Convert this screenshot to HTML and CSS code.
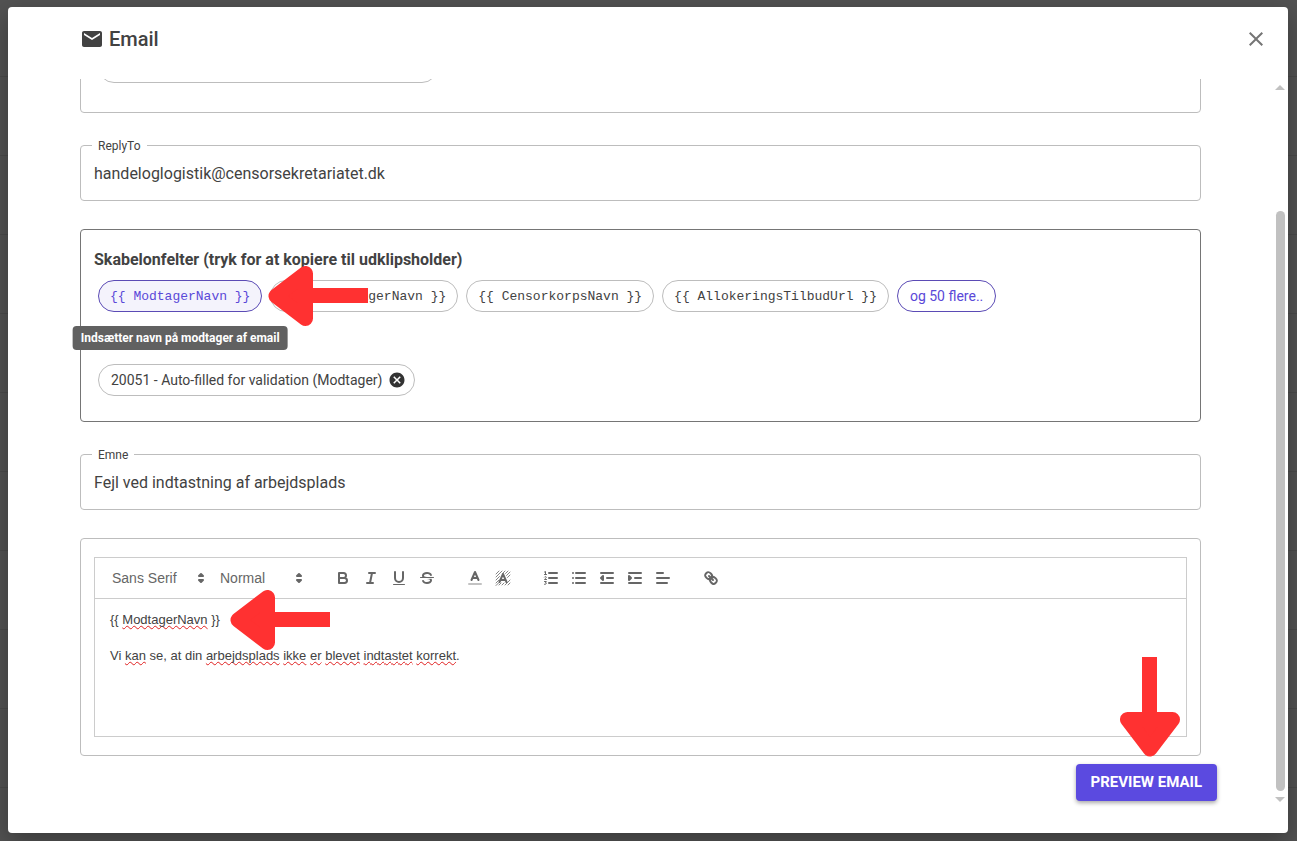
FILE: index.html
```html
<!DOCTYPE html>
<html lang="da">
<head>
  <meta charset="UTF-8">
  <meta name="viewport" content="width=device-width, initial-scale=1.0">
  <title>Email</title>
  <link rel="stylesheet" href="styles.css">
</head>
<body>
  <div class="dialog" role="dialog" aria-labelledby="dialog-title">
    <header class="dialog-header">
      <svg class="icon" viewBox="0 0 24 24"><path d="M20 4H4c-1.100 0-1.990.9-1.990 2L2 18c0 1.100.9 2 2 2h16c1.100 0 2-.9 2-2V6c0-1.100-.9-2-2-2zm0 4l-8 5-8-5V6l8 5 8-5v2z"/></svg>
      <h1 id="dialog-title">Email</h1>
      <button class="close" type="button" aria-label="Luk">
        <svg class="icon" viewBox="0 0 24 24"><path d="M19 6.410L17.590 5 12 10.590 6.410 5 5 6.410 10.590 12 5 17.590 6.410 19 12 13.410 17.590 19 19 17.590 13.410 12z"/></svg>
      </button>
    </header>

    <div class="dialog-body">
      <form class="content">
        <div class="box recipients">
          <div class="chip chip-empty"></div>
        </div>

        <div class="field">
          <label for="reply-to">ReplyTo</label>
          <input id="reply-to" type="text" value="handeloglogistik@censorsekretariatet.dk">
        </div>

        <div class="box templates">
          <h2>Skabelonfelter (tryk for at kopiere til udklipsholder)</h2>
          <div class="chips">
            <div class="chip-wrap">
              <button class="chip code active" type="button">{{ ModtagerNavn }}</button>
              <div class="tooltip" role="tooltip">Indsætter navn på modtager af email</div>
              <svg class="arrow arrow-chip" viewBox="0 0 100 60"><path class="head" d="M8 30L37.500 7.500V52.500Z"/><path d="M40 22h60v15H40z"/></svg>
            </div>
            <button class="chip code" type="button">{{ MedModtagerNavn }}</button>
            <button class="chip code" type="button">{{ CensorkorpsNavn }}</button>
            <button class="chip code" type="button">{{ AllokeringsTilbudUrl }}</button>
            <button class="chip more" type="button">og 50 flere..</button>
          </div>
          <div class="chips selected">
            <div class="chip">
              20051 - Auto-filled for validation (Modtager)
              <button class="remove" type="button" aria-label="Fjern">
                <svg viewBox="0 0 24 24"><path d="M12 2C6.470 2 2 6.470 2 12s4.470 10 10 10 10-4.470 10-10S17.530 2 12 2zm5 13.590L15.590 17 12 13.410 8.410 17 7 15.590 10.590 12 7 8.410 8.410 7 12 10.590 15.590 7 17 8.410 13.410 12 17 15.590z"/></svg>
              </button>
            </div>
          </div>
        </div>

        <div class="field">
          <label for="subject">Emne</label>
          <input id="subject" type="text" value="Fejl ved indtastning af arbejdsplads">
        </div>

        <div class="box editor-box">
          <div class="toolbar">
            <div class="group">
              <div class="picker font">
                <select aria-label="Skrifttype"><option>Sans Serif</option></select>
                <svg viewBox="0 0 18 18"><path class="solid" d="M7 11L9 13L11 11ZM7 7L9 5L11 7Z"/></svg>
              </div>
              <div class="picker size">
                <select aria-label="Størrelse"><option>Normal</option></select>
                <svg viewBox="0 0 18 18"><path class="solid" d="M7 11L9 13L11 11ZM7 7L9 5L11 7Z"/></svg>
              </div>
            </div>
            <div class="group">
              <button type="button" aria-label="Fed">
                <svg viewBox="0 0 18 18"><path d="M5 4H9.500A2.500 2.500 0 0 1 9.500 9H5ZM5 9H10.500A2.500 2.500 0 0 1 10.500 14H5Z"/></svg>
              </button>
              <button type="button" aria-label="Kursiv">
                <svg viewBox="0 0 18 18"><path d="M7 4H13M5 14H11M8 14L10 4"/></svg>
              </button>
              <button type="button" aria-label="Understreget">
                <svg viewBox="0 0 18 18"><path d="M5 3V9a4 4 0 0 0 8 0V3"/><rect class="fill" x="3" y="15" width="12" height="1" rx="0.5"/></svg>
              </button>
              <button type="button" aria-label="Gennemstreget">
                <svg viewBox="0 0 18 18"><path class="thin" d="M2.500 8.500H15.500"/><path class="fill" d="M9.007 8C6.542 7.791 6 7.519 6 6.500 6 5.792 7.283 5 9 5c1.571 0 2.765.679 2.969 1.309a1 1 0 0 0 1.900-.617C13.356 4.106 11.354 3 9 3 6.200 3 4 4.538 4 6.500a3.200 3.200 0 0 0 .5 1.843Z"/><path class="fill" d="M8.984 10C11.457 10.208 12 10.479 12 11.500c0 .708-1.283 1.500-3 1.500-1.571 0-2.765-.679-2.969-1.309a1 1 0 1 0-1.900.617C4.644 13.894 6.646 15 9 15c2.800 0 5-1.538 5-3.500a3.200 3.200 0 0 0-.5-1.843Z"/></svg>
              </button>
            </div>
            <div class="group">
              <button type="button" aria-label="Tekstfarve">
                <svg viewBox="0 0 18 18"><path class="faded" d="M3 15H15"/><path d="M5.500 11L9 3L12.500 11M6.380 9H11.630"/></svg>
              </button>
              <button type="button" aria-label="Baggrundsfarve">
                <svg viewBox="0 0 18 18"><path class="hatch" d="M2 5L5 2M2 8L8 2M2 11L5.500 7.500M2 14L5 11M2 16.500L5 13.500M5 16L7 14M8 16L10 14M11 16L16 11M14 16L16 14M8.500 4.500L11 2M11.500 4.500L14 2M12.500 6.500L16 3M13.500 8.500L16 6"/><path d="M5.500 13L9 5L12.500 13M6.380 11H11.630"/></svg>
              </button>
            </div>
            <div class="group">
              <button type="button" aria-label="Nummereret liste">
                <svg viewBox="0 0 18 18"><path d="M7 4H15M7 9H15M7 14H15"/><path class="thin" d="M2.500 5.500H4.500M3.500 5.500V2.500L2.500 3M2.500 8C3 7.200 4.400 7.500 4.300 8.300C4.200 9 3 9.500 2.500 10.500H4.500M2.500 12.500H4.300L3.500 14C5 14 4.500 15.500 2.500 15.300"/></svg>
              </button>
              <button type="button" aria-label="Punktliste">
                <svg viewBox="0 0 18 18"><path d="M6 4H15M6 9H15M6 14H15M3 4H3M3 9H3M3 14H3"/></svg>
              </button>
              <button type="button" aria-label="Formindsk indrykning">
                <svg viewBox="0 0 18 18"><path d="M3 14H15M3 4H15M9 9H15"/><path class="solid" d="M5 7V11L3 9Z"/></svg>
              </button>
              <button type="button" aria-label="Forøg indrykning">
                <svg viewBox="0 0 18 18"><path d="M3 14H15M3 4H15M9 9H15"/><path class="solid" d="M3 7V11L5 9Z"/></svg>
              </button>
              <button type="button" aria-label="Justering">
                <svg viewBox="0 0 18 18"><path d="M3 9H15M3 14H13M3 4H9"/></svg>
              </button>
            </div>
            <div class="group">
              <button type="button" aria-label="Link">
                <svg viewBox="0 0 18 18"><path d="M7 7L11 11"/><path d="M8.900 4.577a3.476 3.476 0 0 1 .36 4.679A3.476 3.476 0 0 1 4.577 8.900C3.185 7.500 2.035 6.400 4.217 4.217S7.500 3.185 8.900 4.577Z"/><path d="M13.423 9.100a3.476 3.476 0 0 0-4.679-.36 3.476 3.476 0 0 0 .36 4.679c1.392 1.392 2.500 2.542 4.679.36S14.815 10.500 13.423 9.100Z"/></svg>
              </button>
            </div>
          </div>
          <div class="editor" contenteditable="true" spellcheck="false">
            <p class="first">{{ <u>ModtagerNavn</u> }}<svg class="arrow arrow-text" viewBox="0 0 100 60"><path class="head" d="M8 30L37.500 7.500V52.500Z"/><path d="M40 22h60v15H40z"/></svg></p>
            <p><br></p>
            <p>Vi <u>kan</u> se, at din <u>arbejdsplads</u> <u>ikke</u> <u>er</u> <u>blevet</u> <u>indtastet</u> <u>korrekt</u>.</p>
          </div>
        </div>

        <div class="actions">
          <button class="preview" type="button">PREVIEW EMAIL</button>
          <svg class="arrow arrow-down" viewBox="0 0 60 100"><path class="head" d="M30 92L7.500 62.500H52.500Z"/><path d="M22 0h15v60H22z"/></svg>
        </div>
      </form>

      <div class="scrollbar">
        <span class="up"></span>
        <span class="thumb"></span>
        <span class="down"></span>
      </div>
    </div>
  </div>
</body>
</html>
```
FILE: styles.css
```css
* {
  margin: 0;
  padding: 0;
  box-sizing: border-box;
}

body {
  height: 100vh;
  padding: 7px 9px 8px 8px;
  font-family: Roboto, "Liberation Sans", sans-serif;
  color: #424242;
  background: repeating-linear-gradient(#525252 0 76px, #4a4a4a 76px 77px, #525252 77px 79px);
}

button,
input,
select {
  font: inherit;
  color: inherit;
  border: none;
  outline: none;
  background: none;
}

button {
  cursor: pointer;
}

.icon {
  display: block;
  width: 24px;
  height: 24px;
  fill: currentColor;
}

.dialog {
  display: flex;
  flex-direction: column;
  height: 100%;
  padding-bottom: 24px;
  background: #fff;
  border-radius: 4px;
  box-shadow: 0 8px 24px rgba(0, 0, 0, 0.3);
}

.dialog-header {
  display: flex;
  align-items: center;
  gap: 5px;
  height: 72px;
  flex-shrink: 0;
  padding: 0 20px 8px 72px;
}

.dialog-header h1 {
  font-size: 20px;
  font-weight: 500;
  line-height: 32px;
}

.close {
  margin-left: auto;
  color: #757575;
}

.dialog-body {
  display: flex;
  flex: 1;
  min-height: 0;
}

/* scrolled to the end, so the column is anchored at the bottom */
.content {
  flex: 1;
  display: flex;
  flex-direction: column;
  justify-content: flex-end;
  overflow: hidden;
  padding: 0 55px 8px 72px;
}

.content > * {
  flex-shrink: 0;
}

.box,
.field {
  margin: 0 16px 28px 0;
  border: 1px solid #bdbdbd;
  border-radius: 4px;
}

.box {
  padding: 18px 13px;
}

.recipients {
  margin-bottom: 32px;
  padding: 29px 17px;
}

.field {
  position: relative;
  height: 56px;
}

.field label {
  position: absolute;
  top: -8px;
  left: 11px;
  padding: 0 6px;
  font-size: 12px;
  line-height: 16px;
  background: #fff;
}

.field input {
  width: 100%;
  height: 100%;
  padding: 0 13px;
  font-size: 16px;
}

.templates {
  margin-bottom: 32px;
  padding-bottom: 25px;
  border-color: #757575;
}

.templates h2 {
  font-size: 16px;
  font-weight: 700;
  line-height: 24px;
}

.chips {
  display: flex;
  flex-wrap: wrap;
  gap: 8px;
  padding: 8px 4px 0;
}

.chips.selected {
  padding-top: 52px;
}

.chip-wrap {
  position: relative;
}

.chip {
  display: flex;
  align-items: center;
  height: 32px;
  padding: 0 12px;
  font-size: 14px;
  border: 1px solid #bdbdbd;
  border-radius: 16px;
}

.chip-empty {
  width: 340px;
}

.code {
  padding: 0 11px;
  font-family: "Liberation Mono", monospace;
  font-size: 13px;
}

.active,
.more {
  color: #5a48d8;
  border-color: #5b4bb5;
}

.active {
  background: #f4f3fc;
}

.remove {
  margin: 0 -4px 0 6px;
}

.remove svg {
  display: block;
  width: 18px;
  height: 18px;
  fill: #333;
}

.tooltip {
  position: absolute;
  top: 46px;
  left: 50%;
  transform: translateX(-50%);
  padding: 4px 8px;
  font-size: 12px;
  font-weight: 700;
  line-height: 16px;
  white-space: nowrap;
  color: #fff;
  background: #616161;
  border-radius: 4px;
}

.arrow {
  position: absolute;
  z-index: 1;
  width: 100px;
  height: 60px;
  fill: #ff3131;
  pointer-events: none;
}

.arrow .head {
  stroke: #ff3131;
  stroke-width: 15;
  stroke-linejoin: round;
}

.arrow-chip {
  top: -14px;
  left: 170px;
}

.arrow-text {
  top: -21px;
  left: 120px;
}

.arrow-down {
  right: 37px;
  bottom: 44px;
  width: 60px;
  height: 100px;
}

.editor-box {
  margin-bottom: 8px;
}

.toolbar {
  display: flex;
  flex-wrap: wrap;
  gap: 20px;
  padding: 8px;
  border: 1px solid #ccc;
  font-family: "Liberation Sans", Arial, sans-serif;
  font-size: 14px;
  color: #666;
}

.group {
  display: flex;
}

.toolbar svg {
  display: block;
  width: 18px;
  height: 18px;
  fill: none;
  stroke: #666;
  stroke-width: 2;
  stroke-linecap: round;
  stroke-linejoin: round;
}

.toolbar svg .fill {
  fill: #666;
  stroke: none;
}

.toolbar svg .solid {
  fill: #666;
}

.toolbar svg .thin {
  stroke-width: 1;
}

.toolbar svg .hatch {
  stroke-width: 0.8;
}

.toolbar svg .faded {
  opacity: 0.4;
}

.toolbar button {
  width: 28px;
  height: 24px;
  padding: 3px 5px;
}

.picker {
  position: relative;
  height: 24px;
}

.picker.font {
  width: 108px;
}

.picker.size {
  width: 98px;
}

.picker select {
  width: 100%;
  height: 100%;
  padding-left: 9px;
  appearance: none;
}

.picker svg {
  position: absolute;
  top: 3px;
  right: 1px;
  pointer-events: none;
}

.editor {
  min-height: 138px;
  padding: 12px 15px;
  border: 1px solid #ccc;
  border-top: none;
  outline: none;
  font-family: "Liberation Sans", Arial, sans-serif;
  font-size: 13px;
  line-height: 18px;
}

.editor .first {
  position: relative;
}

.editor u {
  text-decoration: underline wavy #e02020 1px;
  text-decoration-skip-ink: none;
}

.actions {
  position: relative;
  display: flex;
  justify-content: flex-end;
}

.preview {
  padding: 0 15px 2px;
  height: 37px;
  font-size: 15px;
  font-weight: 700;
  color: #fff;
  background: #5b4ae0;
  border-radius: 4px;
  box-shadow: 0 2px 4px rgba(0, 0, 0, 0.35);
}

.scrollbar {
  display: flex;
  flex-direction: column;
  align-items: center;
  width: 16px;
  padding: 6px 0 7px;
}

.scrollbar .thumb {
  flex: 1;
  width: 9px;
  margin: 121px 0 6px;
  background: #c1c1c1;
  border-radius: 5px;
}

.up,
.down {
  border: 5px solid transparent;
}

.up {
  border-top: none;
  border-bottom-color: #c1c1c1;
}

.down {
  border-bottom: none;
  border-top-color: #c1c1c1;
}
```
